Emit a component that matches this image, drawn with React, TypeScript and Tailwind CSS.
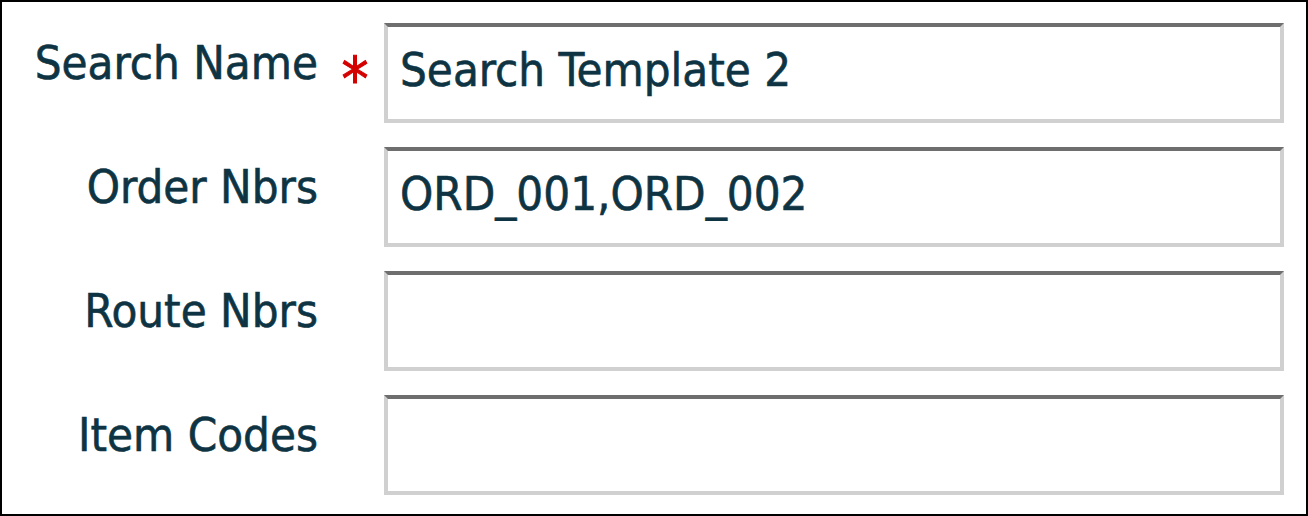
const fields = [
  { label: 'Search Name', value: 'Search Template 2', required: true },
  { label: 'Order Nbrs', value: 'ORD_001,ORD_002', required: false },
  { label: 'Route Nbrs', value: '', required: false },
  { label: 'Item Codes', value: '', required: false },
];

export default function App() {
  return (
    <div
      className="w-[1308px] h-[516px] border-2 border-black bg-white text-[#0e3443] text-[47px] leading-none [font-stretch:condensed] [-webkit-text-stroke:0.6px_#0e3443]"
      style={{ fontFamily: '"DejaVu Sans Condensed", "DejaVu Sans", Tahoma, sans-serif' }}
    >
      <div className="grid grid-cols-[316px_66px_900px] gap-y-[24px] pt-[21px]">
        {fields.map((f) => (
          <div key={f.label} className="contents">
            {/* Label */}
            <div className="h-[100px] flex items-start justify-end pt-[16px] whitespace-nowrap">
              {f.label}
            </div>
            {/* Required marker */}
            <div className="h-[100px] flex items-start justify-center pt-[26px] pl-[8px] text-[#d40000] text-[60px] [-webkit-text-stroke:1px_#d40000]">
              {f.required ? '*' : ''}
            </div>
            {/* Field */}
            <input
              readOnly
              defaultValue={f.value}
              className="h-[100px] w-[900px] bg-white border-4 border-[#d0d0d0] border-t-[#6e6e6e] pl-[12px] pb-[8px] text-[#0e3443] text-[47px] outline-none [font-stretch:condensed] [-webkit-text-stroke:0.6px_#0e3443]"
              style={{ fontFamily: 'inherit' }}
            />
          </div>
        ))}
      </div>
    </div>
  );
}
